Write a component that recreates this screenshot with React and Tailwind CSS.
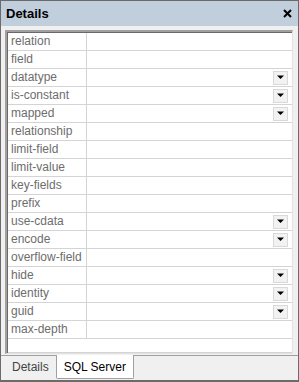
import React from 'react';

const rows = [
  { name: 'relation' },
  { name: 'field' },
  { name: 'datatype', drop: true },
  { name: 'is-constant', drop: true },
  { name: 'mapped', drop: true },
  { name: 'relationship' },
  { name: 'limit-field' },
  { name: 'limit-value' },
  { name: 'key-fields' },
  { name: 'prefix' },
  { name: 'use-cdata', drop: true },
  { name: 'encode', drop: true },
  { name: 'overflow-field' },
  { name: 'hide', drop: true },
  { name: 'identity', drop: true },
  { name: 'guid', drop: true },
  { name: 'max-depth' },
];

const DropButton = () => (
  <div className="w-[15px] h-[14px] mr-[4px] bg-[#f2f2f2] border border-[#d9d9d9] flex items-center justify-center">
    <svg width="7" height="5" viewBox="0 0 7 5">
      <path d="M0 0.5h7L3.5 4z" fill="#000" />
    </svg>
  </div>
);

export default function App() {
  return (
    <div className="w-[299px] h-[382px] bg-[#f0f0f0] border border-[#6b6b6b] border-b-2 flex flex-col" style={{ fontFamily: '"Liberation Sans", Arial, sans-serif' }}>
      {/* title bar */}
      <div className="h-[25px] bg-[#c1cedb] flex items-center justify-between pl-[5px] pr-[6px] shrink-0">
        <span className="text-[13px] font-bold text-black">Details</span>
        <svg width="9" height="9" viewBox="0 0 9 9">
          <path d="M1 1L8 8M8 1L1 8" stroke="#000" strokeWidth="2" />
        </svg>
      </div>

      {/* property grid */}
      <div className="mt-[4px] ml-[4px] mr-[5px] h-[324px] border-l-2 border-t-2 border-[#a0a0a0] border-r border-b border-r-[#e3e3e3] border-b-[#e3e3e3] bg-white shrink-0">
        <div className="border-l border-t border-[#696969] h-full flex flex-col">
          {rows.map((r) => (
            <div key={r.name} className="h-[18px] flex border-b border-[#d4d4d4] shrink-0">
              <div className="w-[79px] border-r border-[#d4d4d4] pl-[3px] text-[12px] leading-[17px] text-[#6d6d6d]">{r.name}</div>
              <div className="flex-1 flex items-center justify-end">{r.drop && <DropButton />}</div>
            </div>
          ))}
          <div className="h-[18px] border-b border-[#d4d4d4]" />
        </div>
      </div>

      {/* tabs */}
      <div className="flex pl-[4px] border-t border-[#a0a0a0] mt-[1px]">
        <div className="h-[22px] px-[7px] flex items-center text-[12px] text-[#444]">Details</div>
        <div className="-mt-[1px] h-[24px] px-[7px] bg-white border border-t-0 border-[#a0a0a0] rounded-b-[2px] flex items-center text-[12px] text-black">SQL Server</div>
      </div>
    </div>
  );
}
